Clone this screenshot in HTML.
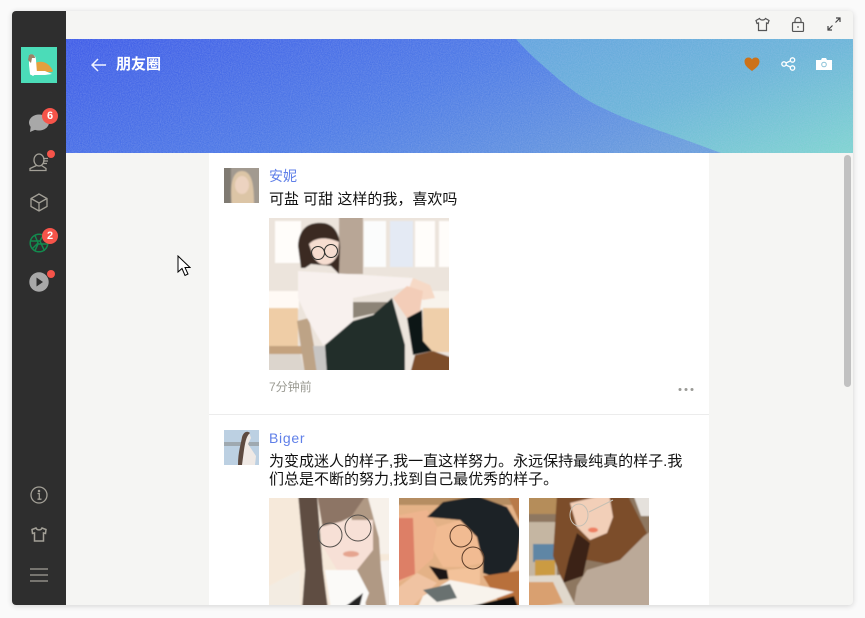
<!DOCTYPE html>
<html lang="zh"><head><meta charset="utf-8"><style>
*{box-sizing:border-box}
html,body{margin:0;width:865px;height:618px;overflow:hidden;background:#fafafa;font-family:"Liberation Sans","Noto Sans CJK SC",sans-serif}
.a{position:absolute}
#win{left:12px;top:11px;width:841px;height:594px;background:#f5f5f3;border-radius:4px;overflow:hidden;box-shadow:0 1px 6px rgba(0,0,0,.16)}
#side{left:12px;top:11px;width:54px;height:594px;background:#2e2e2e;border-radius:4px 0 0 4px}
#banner{left:66px;top:39px;width:787px;height:114px;overflow:hidden}
#card{left:209px;top:153px;width:500px;height:452px;background:#fff}
.badge{position:absolute;background:#f6544a;color:#fff;border-radius:50%;width:16px;height:16px;font-size:11px;font-weight:700;line-height:16px;text-align:center}
.dot{position:absolute;background:#f6544a;border-radius:50%;width:8px;height:8px}
.name{position:absolute;left:269px;color:#5f7fe8;font-size:14px;line-height:20px}
.txt{position:absolute;left:269px;color:#111;font-size:15px;line-height:18px;width:420px}
svg{position:absolute;display:block}
</style></head><body>
<div class="a" id="win"></div>
<div class="a" id="banner">
<svg width="787" height="114" viewBox="0 0 787 114"><defs>
<linearGradient id="g" x1="0" y1="0" x2="1" y2="0.35"><stop offset="0" stop-color="#3f5ce8"/><stop offset=".55" stop-color="#4f7ce6"/><stop offset="1" stop-color="#6b9fdc"/></linearGradient>
<linearGradient id="g2" x1="0" y1="0" x2="1" y2="1"><stop offset="0" stop-color="#64a5de"/><stop offset=".5" stop-color="#6cb6d8"/><stop offset="1" stop-color="#80d6d0"/></linearGradient>
<filter id="n" x="0" y="0" width="100%" height="100%"><feTurbulence type="fractalNoise" baseFrequency=".9" numOctaves="2" seed="4"/><feColorMatrix values="0 0 0 0 .5 0 0 0 0 .6 0 0 0 0 .9 0 0 0 .9 -.25"/></filter>
</defs><rect width="787" height="114" fill="url(#g)"/><path d="M450 0C462 14 474 24 490 38C510 55 525 64 541 71C565 83 602 94 655 114H787V0Z" fill="url(#g2)"/><rect width="787" height="114" filter="url(#n)" opacity=".5"/></svg>
<svg style="left:25px;top:19px" width="16" height="14" viewBox="0 0 16 14" fill="none" stroke="#f0f3ff" stroke-width="1.5"><path d="M15 7H1.500M7 1L1 7l6 6"/></svg>
<div class="a" style="left:50px;top:15px;color:#fff;font-size:15px;font-weight:700;line-height:22px">朋友圈</div>
<svg style="left:678px;top:18px" width="16" height="14" viewBox="0 0 16 14"><path d="M8 14C4 11 .5 8.500.5 4.500C.5 2 2.300.5 4.300.5C6 .5 7.300 1.300 8 2.500C8.700 1.300 10 .5 11.700.5C13.700.5 15.500 2 15.500 4.500C15.500 8.500 12 11 8 14Z" fill="#cc7219"/></svg>
<svg style="left:715px;top:18px" width="15" height="14" viewBox="0 0 15 14" fill="none" stroke="#fff" stroke-width="1.300"><circle cx="3" cy="7" r="2.200"/><circle cx="11.500" cy="3" r="2.200"/><circle cx="11.500" cy="11" r="2.200"/><path d="M5 6l4.500-2.200M5 8l4.500 2.200"/></svg>
<svg style="left:750px;top:19px" width="16" height="12" viewBox="0 0 16 12"><path d="M0 2H5L6 0H10L11 2H16V12H0Z" fill="#fff"/><circle cx="8" cy="6.500" r="2.300" fill="none" stroke="#8cc3d8" stroke-width="1"/></svg>
</div>

<svg style="left:755px;top:17px" width="15" height="15" viewBox="0 0 15 15" fill="none" stroke="#555" stroke-width="1.200"><path d="M4.500 1.500L1 3.500l1 3 1.500-.5V13.500H11.500V6L13 6.500l1-3-3.500-2C9.500 3.500 5.500 3.500 4.500 1.500Z"/></svg>
<svg style="left:791px;top:17px" width="14" height="15" viewBox="0 0 14 15" fill="none" stroke="#555" stroke-width="1.200"><rect x="1.500" y="5.500" width="11" height="9" rx="1"/><path d="M4 5.500V3.500a3 3 0 0 1 6 0v2"/><path d="M7 9v2"/></svg>
<svg style="left:827px;top:17px" width="14" height="14" viewBox="0 0 14 14" fill="none" stroke="#444" stroke-width="1.200"><path d="M8.500 5.500L13 1M9 1h4v4M5.500 8.500L1 13M1 9v4h4"/></svg>

<div class="a" id="side"></div>
<div class="a" style="left:21px;top:47px;width:36px;height:36px;background:#4bdcb8;overflow:hidden">
<svg width="36" height="36" viewBox="0 0 36 36"><path d="M14 16C20 13 28 15 32 24L31 25 15 25Z" fill="#e3a03f"/><path d="M9 28L14 24 24 24 31 27 24 28Z" fill="#fff"/><path d="M8 8C12 6 15 9 15 13L16 26 12 29 9 27 8 18Z" fill="#fff"/><path d="M8 8C11 6 14 8 14 11L11 11 10 16 7 13Z" fill="#9a8468"/></svg></div>
<svg style="left:28px;top:112px" width="22" height="22" viewBox="0 0 22 22"><ellipse cx="11" cy="10.500" rx="10" ry="8" fill="#a8a8a8"/><path d="M2 20L3 12 9 17Z" fill="#a8a8a8"/></svg>
<div class="badge" style="left:42px;top:108px">6</div>
<svg style="left:29px;top:153px" width="20" height="20" viewBox="0 0 20 20" fill="none" stroke="#a3a097" stroke-width="1.300"><ellipse cx="10" cy="7" rx="5" ry="6"/><path d="M7.500 12.500L1 15.500V17.500H17V15.500L12.500 12.500"/><path d="M14 5.500h5M14 8h5M14 10.500h4"/></svg>
<div class="dot" style="left:47px;top:150px"></div>
<svg style="left:30px;top:193px" width="18" height="19" viewBox="0 0 18 19" fill="none" stroke="#a3a097" stroke-width="1.300"><path d="M9 1L1 5.500v8L9 18l8-4.500v-8ZM1 5.500L9 10l8-4.500M9 10v8"/></svg>
<svg style="left:29px;top:233px" width="20" height="20" viewBox="0 0 20 20" fill="none" stroke="#138a4e" stroke-width="1.500"><circle cx="10" cy="10" r="8.800"/><path d="M6 2.500L9 10 3 16M1.500 8H11L14 2.500M11 8l4.500 10M18.500 11H9L6 17.500"/></svg>
<div class="badge" style="left:42px;top:228px">2</div>
<svg style="left:29px;top:272px" width="20" height="20" viewBox="0 0 20 20"><circle cx="10" cy="10" r="9.700" fill="#a8a8a8"/><path d="M7.500 5.500L14 10 7.500 14.500Z" fill="#2e2e2e"/></svg>
<div class="dot" style="left:47px;top:270px"></div>
<svg style="left:30px;top:486px" width="18" height="18" viewBox="0 0 18 18" fill="none" stroke="#a3a097" stroke-width="1.300"><circle cx="9" cy="9" r="8"/><circle cx="9" cy="5" r=".6" fill="#a3a097"/><path d="M7.500 7.500H9.300V13M7.500 13.200h4"/></svg>
<svg style="left:31px;top:527px" width="16" height="15" viewBox="0 0 16 15" fill="none" stroke="#a3a097" stroke-width="1.500"><path d="M5 1L1 2.500 1.500 6.500 3.500 6V14H12.500V6L14.500 6.500 15 2.500 11 1C10 3.500 6 3.500 5 1Z"/></svg>
<svg style="left:30px;top:568px" width="18" height="14" viewBox="0 0 18 14" stroke="#a3a097" stroke-width="1.300"><path d="M0 1h18M0 7h18M0 13h18"/></svg>

<div class="a" id="card"></div>
<div class="a" style="left:209px;top:414px;width:500px;height:1px;background:#ececec"></div>
<div class="a" style="left:844px;top:155px;width:7px;height:232px;background:#c1c1c1;border-radius:4px"></div>

<svg style="left:224px;top:168px" width="35" height="35" viewBox="0 0 35 35"><defs><filter id="b" x="-10%" y="-10%" width="120%" height="120%"><feGaussianBlur stdDeviation=".9"/></filter></defs><rect width="35" height="35" fill="#a29a90"/><g filter="url(#b)"><rect x="-3" y="-3" width="41" height="41" fill="#a29a90"/><rect x="-3" y="-3" width="10" height="41" fill="#7f7a72"/><path d="M8 38C6 20 7 3 18 3S30 20 30 38Z" fill="#dcc5a6"/><ellipse cx="18" cy="17" rx="7" ry="9" fill="#ecd3c0"/></g></svg>
<div class="name" style="top:166px">安妮</div>
<div class="txt" style="top:191px">可盐 可甜 这样的我，喜欢吗</div>

<svg style="left:269px;top:218px" width="180" height="152" viewBox="0 0 180 152"><g filter="url(#b)"><rect x="-4" y="-4" width="188" height="160" fill="#ece4dc"/>
<rect x="6" y="3" width="26" height="42" fill="#fffdfa"/><rect x="70" y="-4" width="24" height="60" fill="#b8a696"/><rect x="95" y="3" width="22" height="46" fill="#fbfcfc"/><rect x="121" y="3" width="23" height="46" fill="#e4eaf4"/><rect x="146" y="3" width="20" height="46" fill="#fffdfa"/><rect x="170" y="3" width="12" height="46" fill="#fffdfa"/>
<rect x="-4" y="73" width="34" height="18" fill="#fffaf5"/><rect x="150" y="73" width="34" height="18" fill="#f8f3ec"/>
<rect x="-4" y="90" width="33" height="40" fill="#efcda6"/><rect x="154" y="90" width="30" height="44" fill="#efcfaa"/><path d="M-4 128L30 130 36 156H-4Z" fill="#dcd5cd"/><path d="M0 128H34L36 136H0Z" fill="#c4a27e"/>
<path d="M84 84L118 84 112 94 84 100Z" fill="#8d8477"/><path d="M28 103L40 100 50 156H36Z" fill="#bda386"/><path d="M44 128L58 128 60 156H48Z" fill="#c8c6c4"/>
<path d="M29 53L144 60 145 68 84 80 84 113 54 127 38 100 29 80Z" fill="#f8f1ee"/>
<path d="M144 60L161 67 166 80 154 82 140 70Z" fill="#f6d9c6"/><path d="M124 80L138 68 154 73 151 93 138 100Z" fill="#f3cdb8"/>
<path d="M56 127L84 103 104 97 123 80 136 127 136 156H58Z" fill="#222e2a"/>
<path d="M138 100L153 92 154 123 163 133 144 137Z" fill="#0f1316"/><path d="M141 156L146 137 164 133 184 140V156Z" fill="#7d4e2c"/>
<path d="M29 28C30 8 42 4 54 5C66 6 72 18 71 32L70 56 62 48 42 46 36 50 32 50Z" fill="#3a2a22"/><path d="M40 26C46 20 56 18 70 24L69 36C63 50 50 50 44 38Z" fill="#f6ddd0"/></g><g fill="none" stroke="#30322f" stroke-width="1"><circle cx="49" cy="35" r="6.500"/><circle cx="62" cy="33" r="6.500"/></g></svg>

<div class="a" style="left:269px;top:379px;color:#9a9a92;font-size:12px;line-height:16px">7分钟前</div>
<svg style="left:678px;top:387px" width="16" height="5" viewBox="0 0 16 5" fill="#9a9a96"><circle cx="2" cy="2.500" r="1.500"/><circle cx="8" cy="2.500" r="1.500"/><circle cx="14" cy="2.500" r="1.500"/></svg>

<svg style="left:224px;top:430px" width="35" height="35" viewBox="0 0 35 35"><rect width="35" height="35" fill="#bcd0e2"/><rect y="12" width="35" height="4" fill="#9fa9b0"/><path d="M14 35L18 14C16 6 20 1 25 2L27 8 24 14 32 26 31 35Z" fill="#efe9e5"/><path d="M14 35C14 22 17 14 18 7C20 1 24 1 26 3C22 6 21 14 20 20L18 35Z" fill="#5d4a40"/></svg>
<div class="name" style="top:428px;letter-spacing:.7px">Biger</div>
<div class="txt" style="top:453px;width:418px">为变成迷人的样子,我一直这样努力。永远保持最纯真的样子.我们总是不断的努力,找到自己最优秀的样子。</div>

<svg style="left:269px;top:498px" width="120" height="107" viewBox="0 0 120 107"><g filter="url(#b)"><rect x="-4" y="-4" width="128" height="115" fill="#f6e9da"/><rect x="92" y="-4" width="32" height="60" fill="#f7f1ea"/><path d="M92 65L124 62V111H92Z" fill="#f6f3f0"/><path d="M-4 90L31 72V111H-4Z" fill="#f3ece2"/>
<path d="M80 -4H98L110 40 112 72 118 111H98L88 72Z" fill="#b09984"/>
<path d="M29 -4H48L54 72 59 111H33L36 72Z" fill="#5f4e42"/>
<path d="M48 -4H98L82 19 54 32Z" fill="#8d7565"/>
<path d="M51 29L78 22 104 22 104 52 88 72 68 72 54 49Z" fill="#f7e0d6"/>
<path d="M56 72L88 72 100 95 94 111H62Z" fill="#fbfaf8"/><path d="M73 111L94 95 90 111Z" fill="#222"/>
<ellipse cx="82" cy="56" rx="8" ry="3" fill="#e5a48f"/></g><g fill="none" stroke="#55504c" stroke-width="1"><circle cx="61" cy="37" r="12"/><circle cx="89" cy="30" r="13"/></g></svg>
<svg style="left:399px;top:498px" width="120" height="107" viewBox="0 0 120 107"><g filter="url(#b)"><rect x="-4" y="-4" width="128" height="115" fill="#e4b287"/><rect x="-4" y="-4" width="128" height="11" fill="#b58d62"/><path d="M108 -4H124V32Z" fill="#b87a48"/>
<path d="M-4 18L28 12 38 29 34 60 14 78-4 86Z" fill="#eeb48e"/><path d="M-4 20L14 20 16 76-4 84Z" fill="#dd7f66"/>
<path d="M28 19L44 4 78 -2 108 9 122 32 118 62 104 82 84 75 84 59 74 35 61 22Z" fill="#1f2325"/>
<path d="M38 29L61 22 78 39 84 65 64 69 44 69 34 52Z" fill="#f1bb92"/>
<path d="M30 68L48 72 60 80 40 82Z" fill="#1a1412"/>
<path d="M48 72L81 69 81 86 51 89Z" fill="#f3c29a"/>
<path d="M84 78L124 72V111H104Z" fill="#b8703a"/>
<path d="M-4 92L18 75 38 85 24 98 11 111H-4Z" fill="#f0c3a2"/>
<path d="M24 98L51 82 115 94 68 111H18Z" fill="#f8f3ec"/><path d="M24 92L51 86 58 100 38 104Z" fill="#69716f"/><path d="M60 111L115 98 120 111Z" fill="#111"/></g><g fill="none" stroke="#5c3d2a" stroke-width="1"><circle cx="62" cy="38" r="11"/><circle cx="74" cy="60" r="11"/></g></svg>
<svg style="left:529px;top:498px" width="120" height="107" viewBox="0 0 120 107"><g filter="url(#b)"><rect x="-4" y="-4" width="128" height="115" fill="#8e7760"/><rect x="-4" y="-4" width="32" height="20" fill="#b58d5a"/><rect x="-4" y="24" width="32" height="55" fill="#c5b6a2"/><rect x="4" y="46" width="26" height="18" fill="#5e86a5"/><rect x="6" y="62" width="20" height="16" fill="#cb9b42"/><path d="M104 -4H124V18H112Z" fill="#e5e1dc"/>
<path d="M28 -4H98L118 35 90 68 58 62 34 85 24 58Z" fill="#7b4e2b"/>
<path d="M41 5L80 -4 84 19 78 35 61 42 48 29Z" fill="#f2cfb8"/>
<path d="M58 72L91 62 115 38 124 32V111H44L48 88Z" fill="#bba998"/>
<path d="M48 35L61 45 54 78 34 85 40 60Z" fill="#3a2413"/>
<path d="M-4 78L31 77 48 111H-4Z" fill="#e0d8cc"/><path d="M-4 84L24 84 34 105-4 111Z" fill="#d9a070"/>
<ellipse cx="64" cy="32" rx="5" ry="2.500" fill="#ee7f62"/></g><g fill="none" stroke="#c5bfb4" stroke-width="1"><ellipse cx="50" cy="17" rx="9" ry="11"/><path d="M60 14L84 2"/></g></svg>

<svg style="left:177px;top:255px" width="14" height="22" viewBox="0 0 14 22"><path d="M1 1V17L5 13.500 8 20.500 11 19 8 12.500H13Z" fill="#fff" stroke="#000" stroke-width="1"/></svg>
</body></html>
